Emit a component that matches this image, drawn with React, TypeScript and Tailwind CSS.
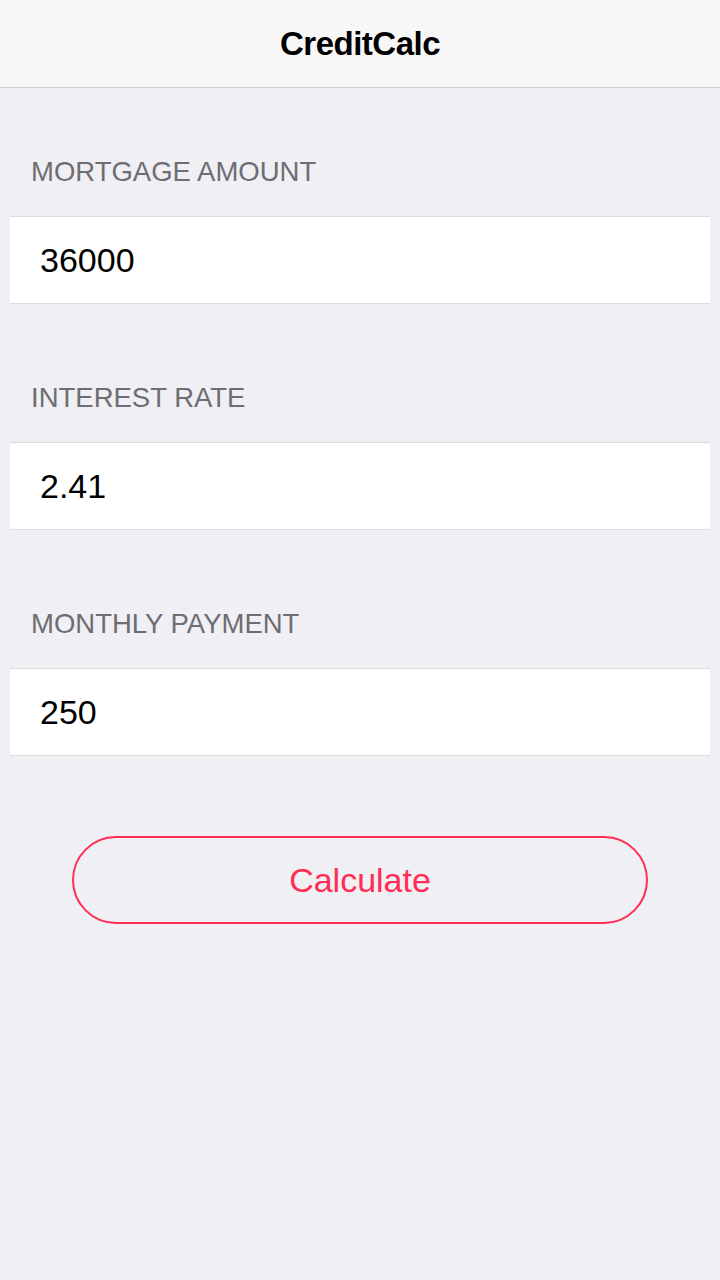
export default function App() {
  const fields = [
    { label: 'Mortgage Amount', value: '36000' },
    { label: 'Interest Rate', value: '2.41' },
    { label: 'Monthly Payment', value: '250' },
  ];

  return (
    <div className="min-h-[1280px] bg-[#efeff4] font-['Liberation_Sans',Arial,sans-serif]">
      {/* Nav bar */}
      <div className="h-[88px] bg-[#f7f7f7] border-b border-[#d3d3d6] flex items-center justify-center">
        <h1 className="text-[33px] font-bold text-black tracking-[-0.5px]">CreditCalc</h1>
      </div>

      <div className="pt-[64px] flex flex-col gap-[74px]">
        {fields.map((field) => (
          <div key={field.label}>
            <div className="h-[40px] leading-[40px] pl-[31px] text-[27.5px] uppercase text-[#6d6d72]">
              {field.label}
            </div>
            <div className="mt-[24px] mx-[10px] h-[88px] bg-white border-y border-[#dcdcdf] flex items-center px-[30px]">
              <span className="text-[34px] text-black">{field.value}</span>
            </div>
          </div>
        ))}
      </div>

      <div className="px-[72px] mt-[80px]">
        <button className="w-full h-[88px] rounded-full border-2 border-[#ff2d55] text-[#ff2d55] text-[34px] flex items-center justify-center">
          Calculate
        </button>
      </div>
    </div>
  );
}
